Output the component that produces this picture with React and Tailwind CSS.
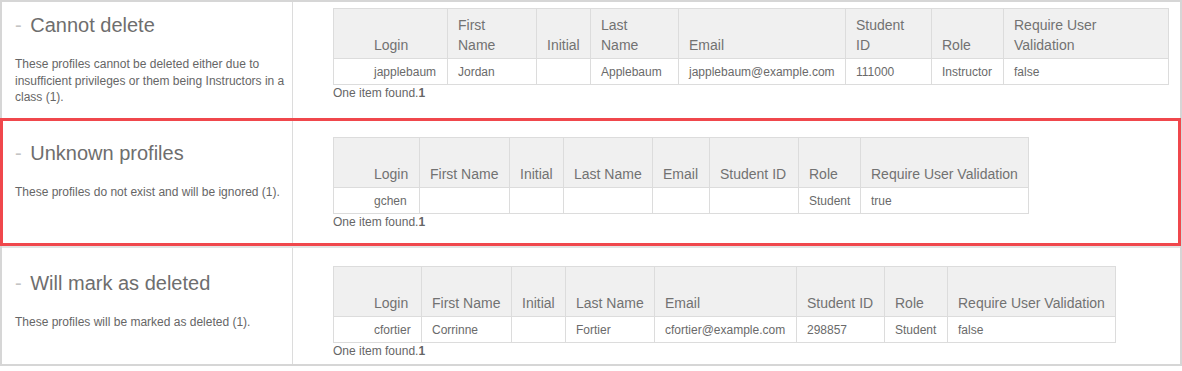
import React from "react";

const FONT = "font-['Liberation_Sans',Arial,sans-serif]";

const sections = [
  {
    title: "Cannot delete",
    text: "These profiles cannot be deleted either due to insufficient privileges or them being Instructors in a class (1).",
    rowClass: "h-[116px]",
    leftPad: "pt-[11px]",
    rightPad: "pt-[6px]",
    tableWidth: "w-[835px]",
    cols: ["w-[114px]", "w-[89px]", "w-[54px]", "w-[88px]", "w-[167px]", "w-[86px]", "w-[72px]", "w-[165px]"],
    headers: [["Login"], ["First", "Name"], ["Initial"], ["Last", "Name"], ["Email"], ["Student", "ID"], ["Role"], ["Require User", "Validation"]],
    row: ["japplebaum", "Jordan", "", "Applebaum", "japplebaum@example.com", "111000", "Instructor", "false"],
  },
  {
    title: "Unknown profiles",
    text: "These profiles do not exist and will be ignored (1).",
    rowClass: "h-[128px]",
    leftPad: "pt-[23px]",
    rightPad: "pt-[19px]",
    tableWidth: "w-[695px]",
    cols: ["w-[86px]", "w-[90px]", "w-[54px]", "w-[89px]", "w-[57px]", "w-[89px]", "w-[62px]", "w-[168px]"],
    headers: [["Login"], ["First Name"], ["Initial"], ["Last Name"], ["Email"], ["Student ID"], ["Role"], ["Require User Validation"]],
    row: ["gchen", "", "", "", "", "", "Student", "true"],
    flagged: true,
  },
  {
    title: "Will mark as deleted",
    text: "These profiles will be marked as deleted (1).",
    rowClass: "h-[118px] border-t-2 border-[#e4e4e4]",
    leftPad: "pt-[23px]",
    rightPad: "pt-[18px]",
    tableWidth: "w-[782px]",
    cols: ["w-[88px]", "w-[90px]", "w-[54px]", "w-[89px]", "w-[142px]", "w-[88px]", "w-[63px]", "w-[168px]"],
    headers: [["Login"], ["First Name"], ["Initial"], ["Last Name"], ["Email"], ["Student ID"], ["Role"], ["Require User Validation"]],
    row: ["cfortier", "Corrinne", "", "Fortier", "cfortier@example.com", "298857", "Student", "false"],
  },
];

const ProfileTable = ({ section }) => (
  <table className={`table-fixed border-collapse ${section.tableWidth}`}>
    <colgroup>
      {section.cols.map((c, i) => (
        <col key={i} className={c} />
      ))}
    </colgroup>
    <thead>
      <tr>
        {section.headers.map((lines, i) => (
          <th
            key={i}
            className={`h-[50px] border border-[#dcdcdc] bg-[#f0f0f0] pt-[6px] pb-[3px] text-left align-bottom text-[14px] leading-[20px] font-normal text-[#727272] ${
              i === 0 ? "pl-[40px] pr-[10px]" : "px-[10px]"
            }`}
          >
            {lines.map((l, j) => (
              <div key={j}>{l}</div>
            ))}
          </th>
        ))}
      </tr>
    </thead>
    <tbody>
      <tr>
        {section.row.map((v, i) => (
          <td
            key={i}
            className={`border border-[#dcdcdc] pt-[5px] pb-[4px] text-[12px] leading-[16px] whitespace-nowrap text-[#6a6a6a] ${
              i === 0 ? "pl-[40px] pr-[10px]" : "px-[10px]"
            }`}
          >
            {v}
          </td>
        ))}
      </tr>
    </tbody>
  </table>
);

const Section = ({ section }) => (
  <div className={`relative flex ${section.rowClass}`}>
    <div className={`w-[291px] shrink-0 border-r border-[#dcdcdc] pl-[13px] ${section.leftPad}`}>
      <h2 className="text-[20px] leading-[24px] font-normal text-[#6e6e6e]">
        <span className="mr-[3px] text-[#c4c4c4]">-</span> {section.title}
      </h2>
      <p className="mt-[19px] pr-[2px] text-[12px] leading-[16.7px] text-[#666]">{section.text}</p>
    </div>
    <div className={`flex-1 pl-[40px] ${section.rightPad}`}>
      <ProfileTable section={section} />
      <div className="text-[12px] leading-[16px] text-[#666]">
        One item found.<b className="font-bold">1</b>
      </div>
    </div>
    {section.flagged && (
      <div className="pointer-events-none absolute inset-y-0 left-[-2px] right-[-1px] border-[3px] border-[#f0474c]" />
    )}
  </div>
);

export default function App() {
  return (
    <div className={`w-[1182px] bg-white ${FONT}`}>
      <div className="border-2 border-[#d6d6d6]">
        {sections.map((s) => (
          <Section key={s.title} section={s} />
        ))}
      </div>
    </div>
  );
}
